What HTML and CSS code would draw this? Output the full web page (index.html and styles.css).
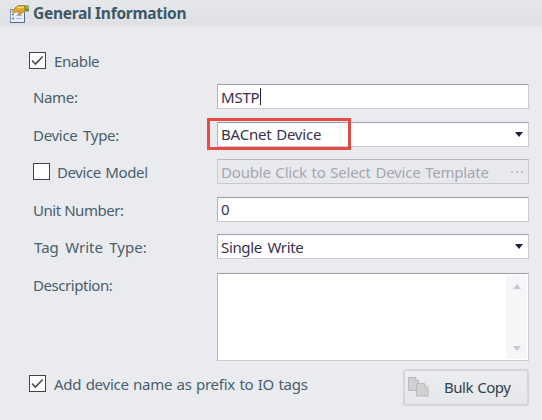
FILE: index.html
```html
<!DOCTYPE html>
<html lang="en">
<head>
<meta charset="utf-8">
<title>General Information</title>
<link rel="stylesheet" href="styles.css">
</head>
<body>
<header class="header">
  <svg class="props" width="21" height="20" viewBox="0 0 21 20">
    <rect x="1.5" y="5.500" width="14" height="13" fill="#e8effa" stroke="#8094b8"/>
    <path d="M1 18.500h14.500V9" fill="none" stroke="#536b98"/>
    <path d="M3 10.500h2M3 14.500h2" stroke="#4f78b8" stroke-width="1.600"/>
    <path d="M7 11.500h6M7 14.500h6M4 7.500h2" stroke="#a9bad4"/>
    <path d="M3 7.500 7 3 10 1.500h6v5.500l-3 2-2 2-2-.5 1.500-3-4 .5-2 1z" fill="#dfa92e" stroke="#9b7632" stroke-width=".8"/>
    <path d="M8 3.500h7" stroke="#f7dc78" stroke-width="1.400"/>
    <path d="M16 1.500h4v6h-4z" fill="#708b3f"/>
    <path d="M17 2.500h3v2h-3z" fill="#a7bd62"/>
  </svg>
  <h1>General Information</h1>
</header>
<main class="form">
  <label class="row enable"><span class="check"><svg width="17" height="17" viewBox="0 0 17 17"><path d="M3 8.5 6.5 12 13.7 4.5"/></svg></span><span>Enable</span></label>
  <div class="row"><span class="label name">Name:</span><div class="field"><span class="mstp">MSTP</span><i class="caret"></i></div></div>
  <div class="row"><span class="label type">Device Type:</span><div class="field"><span class="bacnet">BACnet Device</span><i class="arrow"></i><i class="highlight"></i></div></div>
  <div class="row"><label class="label model"><span class="check"></span><span>Device Model</span></label><div class="field disabled"><span class="template">Double Click to Select Device Template</span><i class="dots"><b></b><b></b><b></b></i></div></div>
  <div class="row"><span class="label unit">Unit Number:</span><div class="field"><span>0</span></div></div>
  <div class="row"><span class="label tag">Tag Write Type:</span><div class="field"><span class="single">Single Write</span><i class="arrow"></i></div></div>
  <div class="row description"><span class="label desc">Description:</span><div class="field area"><div class="scroll"><i class="up"></i><i class="down"></i></div></div></div>
  <div class="footer">
    <label class="prefix"><span class="check"><svg width="17" height="17" viewBox="0 0 17 17"><path d="M3 8.5 6.5 12 13.7 4.5"/></svg></span><span>Add device name as prefix to IO tags</span></label>
    <button class="bulk" type="button">
      <svg width="21" height="20" viewBox="0 0 21 20" fill="#d0d1d1" stroke="#b9baba"><path d="M.5.5h7l3 3v10H.5z"/><path d="M7.500.5v3h3" fill="#eee"/><path d="M8.500 6.500h8l3.500 3.500v9H8.500z"/><path d="M16.500 6.500V10H20" fill="#eee"/></svg>
      <span>Bulk Copy</span>
    </button>
  </div>
</main>
</body>
</html>
```
FILE: styles.css
```css
* { box-sizing: border-box; }
body { margin: 0; width: 542px; height: 420px; overflow: hidden; background: #eaebef; color: #47606b; font: 15px/24px "Noto Sans", sans-serif; }
span { white-space: nowrap; }
.header { height: 27px; display: flex; align-items: center; padding-left: 9px; background: linear-gradient(#e6e7eb, #dfe0e4); border-bottom: 1px solid #e8e9ec; }
.props { flex: none; margin-top: 1px; }
h1 { margin: 0 0 0 3px; font-size: 15.5px; line-height: 26px; font-weight: 700; color: #3d5867; white-space: nowrap; letter-spacing: -.28px; }
.form { padding: 21px 13px 0 29px; }
.row { display: flex; height: 25px; margin-bottom: 12.5px; }
.label { flex: 0 0 188px; padding-left: 4px; line-height: 26px; letter-spacing: -.45px; }
.name { letter-spacing: -.35px; }
.type { letter-spacing: -.3px; word-spacing: 2px; }
.tag { padding-left: 5px; letter-spacing: 0; word-spacing: 2.5px; }
.enable { height: 25px; margin-bottom: 11px; align-items: center; letter-spacing: -.4px; }
.enable, .prefix { gap: 8px; }
.prefix { letter-spacing: -.25px; word-spacing: .7px; }
.check { flex: none; width: 17px; height: 17px; border: 1px solid #424346; background: #fff; }
.check svg { display: block; margin: -1px; fill: none; stroke: #4c4d51; stroke-width: 1.7; }
.model { display: flex; align-items: center; gap: 7px; letter-spacing: -.4px; word-spacing: 1px; }
.field { flex: 1; position: relative; display: flex; align-items: center; padding-left: 3px; background: #fff; border: 1px solid #cacbd2; border-top-color: #9b9ca8; border-left-color: #b3b4be; color: #35324d; }
.disabled { background: #e8e9ed; border-color: #c8c9cf; border-top-color: #b5b6bf; color: #a5a6b2; }
.mstp { letter-spacing: -.2px; }
.bacnet { letter-spacing: -.2px; word-spacing: 1px; }
.template { letter-spacing: -.2px; word-spacing: 1px; }
.single { letter-spacing: -.35px; word-spacing: 2px; }
.caret { width: 1px; height: 17px; background: #222; margin-left: 1px; }
.arrow { margin-left: auto; margin-right: 5px; border: 4.5px solid transparent; border-top: 5px solid #252139; border-bottom: 0; }
.highlight { position: absolute; left: -11px; top: -5px; width: 144px; height: 32px; border: 3px solid #e84a43; }
.dots { display: flex; gap: 3px; margin: 0 5px 0 auto; }
.dots b { width: 2px; height: 2px; background: #bfc0c8; }
.description { height: 88px; margin-bottom: 8px; margin-top: 13.5px; }
.desc { line-height: 24px; }
.scroll { width: 21px; height: 84px; margin: 1px 1px 1px auto; background: #f5f6f7; display: flex; flex-direction: column; justify-content: space-between; align-items: center; padding: 9px 0 8px; }
.up, .down { border: 4px solid transparent; }
.up { border-top: 0; border-bottom: 5px solid #c5c6ca; }
.down { border-bottom: 0; border-top: 5px solid #c5c6ca; }
.footer { display: flex; justify-content: space-between; height: 38px; }
.prefix { display: flex; height: 30px; align-items: center; }
.bulk { width: 126px; height: 37px; padding: 0 0 0 3px; display: flex; align-items: center; border: 2px solid #d5d6d9; border-radius: 3px; background: linear-gradient(#ecedf0, #e6e7ea); color: #30414f; font: inherit; letter-spacing: -.5px; word-spacing: 1px; }
.bulk span { margin-left: 15px; }
```
